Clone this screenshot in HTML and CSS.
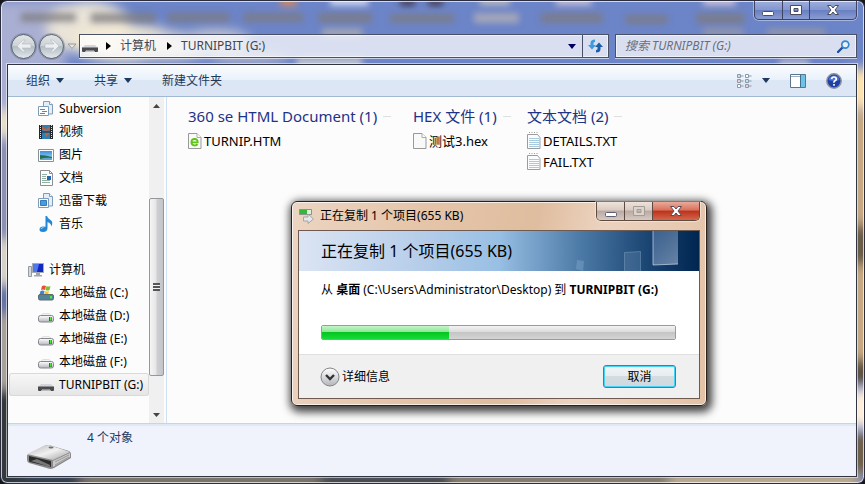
FILE: index.html
```
<!DOCTYPE html>
<html lang="zh-CN">
<head>
    <meta charset="utf-8">
    <meta name="viewport" content="width=device-width, initial-scale=1">
    <title>TURNIPBIT (G:)</title>
    <link rel="stylesheet" href="styles.css">
</head>
<body>
    <!-- shared icons -->
    <svg class="defs" aria-hidden="true">
        <defs>
            <linearGradient id="metal" x1="0" y1="0" x2="0" y2="1">
                <stop offset="0" stop-color="#fff"/>
                <stop offset="1" stop-color="#b4b6bc"/>
            </linearGradient>
            <linearGradient id="sky" x1="0" y1="0" x2="0" y2="1">
                <stop offset="0" stop-color="#3f8fe0"/>
                <stop offset="1" stop-color="#a8e2f6"/>
            </linearGradient>
            <symbol id="i-stack" viewBox="0 0 16 16">
                <path d="M5.500.5h6l3 3v9.500h-9z" fill="#e3eef7" stroke="#7f9db9"/>
                <path d="M11.500.5v3h3" fill="#fff" stroke="#7f9db9"/>
                <path d="M.5 5.500h10v9H.5z" fill="#fff" stroke="#7f9db9"/>
            </symbol>
            <symbol id="i-drive" viewBox="0 0 16 16">
                <path d="M2 8l3-2.500h6L14 8z" fill="#f4f4f4" stroke="#d0d0d0" stroke-width=".6"/>
                <rect x=".5" y="7.500" width="15" height="6.500" rx="2" fill="url(#metal)" stroke="#85878c"/>
                <rect x="11" y="9" width="3" height="4" fill="#3d6b3d"/>
                <rect x="12" y="9" width="1.500" height="3.500" fill="#4dea35"/>
            </symbol>
            <symbol id="i-usb" viewBox="0 0 16 16">
                <path d="M3 7h10l3 3H0z" fill="#d4d5d8"/>
                <path d="M0 9.500h16V13q0 1-1 1h-2l-1.500-2h-7L3 14H1q-1 0-1-1z" fill="#4a4b4f"/>
                <path d="M4.500 12h7l1 1.500h-9z" fill="#8d8e92"/>
            </symbol>
            <symbol id="i-note" viewBox="0 0 14 17">
                <path d="M.5 2.500h10l2.500 3v11H.5z" fill="#fafcfd" stroke="#9a9c9e"/>
                <path d="M2 6.500h10M2 8.500h10M2 10.500h10M2 12.500h10M2 14.500h10" stroke="#a9cbe0"/>
                <path d="M2.500 0v4M5 0v4M7.500 0v4M10 0v4" stroke="#9a9c9e" stroke-dasharray="1 1"/>
            </symbol>
            <symbol id="i-page" viewBox="0 0 14 17">
                <path d="M.5 1.500h8.500l4 4v11H.5z" fill="#f9f9f9" stroke="#999"/>
                <path d="M9 1.500v4h4" fill="#fff" stroke="#aaa"/>
            </symbol>
        </defs>
    </svg>

    <div class="window">
        <!-- blurred desktop behind the glass -->
        <svg class="wallpaper" viewBox="0 0 865 484" preserveAspectRatio="none" aria-hidden="true">
            <defs>
                <filter id="soft" x="-20%" y="-20%" width="140%" height="140%"><feGaussianBlur stdDeviation="6"/></filter>
                <filter id="smear" x="-20%" y="-50%" width="140%" height="200%"><feGaussianBlur stdDeviation="3"/></filter>
            </defs>
            <rect width="865" height="484" fill="#6c84c8"/>
            <g filter="url(#soft)">
                <rect x="-10" y="0" width="75" height="180" fill="#a9afd2"/>
                <rect x="-10" y="110" width="30" height="25" fill="#e8dfc8"/>
                <rect x="-10" y="140" width="30" height="130" fill="#8d91b4"/>
                <rect x="-10" y="240" width="30" height="45" fill="#d8d2c8"/>
                <rect x="-10" y="285" width="30" height="30" fill="#6674a4"/>
                <rect x="-10" y="315" width="30" height="75" fill="#a9a29b"/>
                <rect x="-10" y="390" width="30" height="100" fill="#35393a"/>
                <ellipse cx="88" cy="26" rx="42" ry="26" fill="#e9e3d8"/>
                <ellipse cx="125" cy="42" rx="55" ry="19" fill="#f3ead3"/>
                <ellipse cx="165" cy="45" rx="50" ry="14" fill="#dcd7d0"/>
                <ellipse cx="215" cy="40" rx="35" ry="12" fill="#c2c4d0"/>
                <ellipse cx="250" cy="58" rx="40" ry="6" fill="#aeb3ca"/>
                <rect x="850" y="68" width="30" height="40" fill="#ffe3b0"/>
                <rect x="850" y="110" width="30" height="270" fill="#c7a981"/>
                <rect x="850" y="225" width="30" height="40" fill="#6a5b47"/>
                <rect x="850" y="360" width="30" height="25" fill="#5d5141"/>
                <rect x="850" y="390" width="30" height="38" fill="#fff0dc"/>
                <rect x="850" y="434" width="30" height="40" fill="#6f5f49"/>
                <rect x="-10" y="474" width="90" height="20" fill="#2f3940"/>
                <rect x="80" y="474" width="240" height="20" fill="#7c715f"/>
                <rect x="320" y="474" width="130" height="20" fill="#474642"/>
                <rect x="450" y="474" width="220" height="20" fill="#8a7b64"/>
                <rect x="670" y="474" width="190" height="20" fill="#c2ad8b"/>
            </g>
            <g filter="url(#smear)" fill="#7d7a7e" opacity=".75">
                <rect x="20" y="12" width="55" height="9"/>
                <rect x="90" y="12" width="65" height="10"/>
                <rect x="167" y="12" width="62" height="9"/>
                <rect x="243" y="12" width="60" height="9"/>
                <rect x="318" y="12" width="54" height="10"/>
                <rect x="390" y="13" width="64" height="9"/>
                <rect x="474" y="12" width="45" height="10" fill="#b7b2b4"/>
                <rect x="541" y="12" width="62" height="10"/>
                <rect x="626" y="14" width="42" height="9"/>
                <rect x="697" y="12" width="48" height="11"/>
                <rect x="704" y="28" width="40" height="7" fill="#a09d9e"/>
                <rect x="768" y="28" width="58" height="7" fill="#a09d9e"/>
                <rect x="322" y="28" width="40" height="8" fill="#b9b3a8"/>
                <rect x="400" y="-2" width="15" height="7" fill="#3b2730"/>
                <rect x="428" y="-2" width="15" height="7" fill="#3b2730"/>
                <rect x="330" y="-3" width="38" height="7" fill="#fff"/>
                <rect x="480" y="-3" width="30" height="7" fill="#d8cdbd"/>
                <rect x="556" y="-3" width="36" height="7" fill="#ead8d8"/>
                <rect x="704" y="-3" width="32" height="7" fill="#f5dede"/>
                <rect x="280" y="-3" width="16" height="8" fill="#f08a3c"/>
                <rect x="296" y="58" width="66" height="7" fill="#f5ecd2"/>
                <rect x="780" y="60" width="30" height="5" fill="#f5ecd2"/>
            </g>
        </svg>

        <header class="glass">
            <div class="caption">
                <button class="cap" type="button" aria-label="最小化"><svg width="14" height="14" viewBox="0 0 14 14"><rect x="1.500" y="8.500" width="11" height="4" rx="1" fill="#fff" stroke="#4b4d5e"/></svg></button>
                <button class="cap" type="button" aria-label="最大化"><svg width="14" height="14" viewBox="0 0 14 14"><path fill-rule="evenodd" d="M1.500 2.500h11v9h-11zM5 5.500v3h4v-3z" fill="#fff" stroke="#4b4d5e"/></svg></button>
                <button class="cap cap-close" type="button" aria-label="关闭"><svg width="14" height="14" viewBox="0 0 14 14"><path d="M1.500 2.500h3.500l2 2.500 2-2.500h3.500L9 7l3.500 4.500H9L7 9l-2 2.500H1.500L5 7z" fill="#fff" stroke="#4b4d5e"/></svg></button>
            </div>
            <div class="navbar">
                <div class="travel">
                    <button class="round" type="button" aria-label="后退"><svg width="18" height="18" viewBox="0 0 18 18"><path d="M2 9l6-6h2.500L7 7h9v4H7l3.500 4H8z" fill="#eceeef" stroke="#b5bbc2" stroke-width=".6"/></svg></button>
                    <button class="round" type="button" aria-label="前进"><svg width="18" height="18" viewBox="0 0 18 18"><path d="M16 9l-6-6H7.500L11 7H2v4h9l-3.500 4H10z" fill="#eceeef" stroke="#b5bbc2" stroke-width=".6"/></svg></button>
                    <svg width="10" height="7" viewBox="0 0 10 7"><path d="M1 1h8L5 5.500z" fill="#e6e4e0" stroke="#9b9a9c"/></svg>
                </div>
                <div class="address">
                    <svg width="16" height="16"><use href="#i-usb"/></svg>
                    <svg class="crumb-arrow" width="5" height="8" viewBox="0 0 5 8"><path d="M0 0l5 4-5 4z"/></svg>
                    <a href="#">计算机</a>
                    <svg class="crumb-arrow" width="5" height="8" viewBox="0 0 5 8"><path d="M0 0l5 4-5 4z"/></svg>
                    <a href="#">TURNIPBIT (G:)</a>
                    <button class="drop" type="button" aria-label="历史"><svg width="8" height="5" viewBox="0 0 8 5"><path d="M0 0h8L4 5z" fill="#00005c"/></svg></button>
                    <button class="refresh" type="button" aria-label="刷新"><svg width="15" height="14" viewBox="0 0 15 14"><path d="M7 .5Q2.500.5 2.500 4v2H0l4 4.500L8 6H5.500V4q0-1 1.500-1z" fill="#3c9be0"/><path d="M8 13.500q4.500 0 4.500-3.500V8H15l-4-4.500L7 8h2.500v2q0 1-1.500 1z" fill="#1c5ea8"/></svg></button>
                </div>
                <div class="search">
                    <input type="text" aria-label="搜索" placeholder="搜索 TURNIPBIT (G:)">
                    <svg width="13" height="13" viewBox="0 0 13 13"><path d="M1 12l5-5" stroke="#1d4f9c" stroke-width="2.400" stroke-linecap="round"/><circle cx="8.300" cy="4.600" r="3.500" fill="#e8f2fb" stroke="#3a86c8" stroke-width="1.700"/></svg>
                </div>
            </div>
        </header>

        <div class="client">
            <div class="toolbar">
                <button type="button">组织 <svg width="8" height="5" viewBox="0 0 8 5"><path d="M0 0h8L4 5z"/></svg></button>
                <button type="button">共享 <svg width="8" height="5" viewBox="0 0 8 5"><path d="M0 0h8L4 5z"/></svg></button>
                <button type="button">新建文件夹</button>
                <div class="tools">
                    <button type="button" aria-label="更改视图">
                        <svg width="16" height="14" viewBox="0 0 16 14"><g fill="#fff" stroke="#8b98a8"><path d="M1.500.5h3v3h-3zM1.500 5.500h3v3h-3zM1.500 10.500h3v3h-3zM9.500.5h3v3h-3zM9.500 5.500h3v3h-3zM9.500 10.500h3v3h-3z"/><path d="M5 2h2.500M5 7h2.500M5 12h2.500M13 2h2.500M13 7h2.500M13 12h2.500"/></g><path d="M2.500 6.500h1v1h-1zM10.500 11.500h1v1h-1z" fill="#d33"/><path d="M2.500 1.500h1v1h-1zM10.500 6.500h1v1h-1z" fill="#37a"/></svg>
                        <svg width="8" height="5" viewBox="0 0 8 5"><path d="M0 0h8L4 5z"/></svg>
                    </button>
                    <button type="button" aria-label="预览窗格"><svg width="16" height="14" viewBox="0 0 16 14"><path d="M.5.5h15v13H.5z" fill="#fff" stroke="#5b7490"/><path d="M1 2.500h9" stroke="#9fb0c3"/><path d="M10 1h5v12h-5z" fill="#6cc3e4"/><path d="M10.500 1v12" stroke="#416f93"/></svg></button>
                    <button type="button" aria-label="帮助"><svg width="16" height="16" viewBox="0 0 16 16"><circle cx="8" cy="8" r="7.200" fill="#1f3fa8" stroke="#8d929b" stroke-width="1.500"/><path d="M2.500 7a5.600 5.600 0 0 1 11 0q-5 2-11 0" fill="#4d74d0"/><path d="M5.600 6.200Q5.800 4 8 4t2.300 1.900Q10.300 7 9 7.700T8 9.800M8 11v1.700" fill="none" stroke="#fff" stroke-width="1.700"/></svg></button>
                </div>
            </div>

            <div class="panes">
                <nav class="sidebar">
                    <ul class="tree">
                        <li><a href="#"><svg width="16" height="16"><use href="#i-stack"/><path d="M2 8.500h5M4 10.500h5M2 12.500h5" stroke="#5d86b8"/></svg>Subversion</a></li>
                        <li><a href="#"><svg width="16" height="16" viewBox="0 0 16 16"><path d="M1 1h14v14H1z" fill="#22282b"/><path d="M4 1h8v6.500H4zM4 8.500h8V15H4z" fill="#2e80b4"/><path d="M4 2l4 3 4-3v4L8 7 4 6zM12 9l-4 4-1-4z" fill="#b5654a"/><path d="M2.500 1v14M13.500 1v14" stroke="#dfe6e6" stroke-dasharray="1 1"/></svg>视频</a></li>
                        <li><a href="#"><svg width="16" height="16" viewBox="0 0 16 16"><path d="M.5 2.500h15v12H.5z" fill="#fff" stroke="#8b8f94"/><path d="M2 4h12v9H2z" fill="url(#sky)"/><path d="M2 8q5 0 12 2v3H2z" fill="#2d6b4f"/><path d="M2 12q6-2 12-1v2H2z" fill="#5ba8d0"/></svg>图片</a></li>
                        <li><a href="#"><svg width="16" height="16" viewBox="0 0 16 16"><path d="M2.500.5h9l3 3v12h-12z" fill="#fff" stroke="#8b8f94"/><path d="M11.500.5v3h3" fill="none" stroke="#8b8f94"/><path d="M4 4.500h5M4 6.500h4M4 8.500h4M4 10.500h8M4 12.500h8" stroke="#8fb3a0"/><path d="M9 6h4v4H9z" fill="#2567b5"/></svg>文档</a></li>
                        <li><a href="#"><svg width="16" height="16"><use href="#i-stack"/><path d="M2.500 7.500h6v5h-6z" fill="#469de2" stroke="#347bb8"/></svg>迅雷下载</a></li>
                        <li><a href="#"><svg width="16" height="16" viewBox="0 0 16 16"><path d="M7.500 0H9q.5 2.500 3.500 4t1 6.500Q13 7 9.500 6v6q0 4-4.500 4-3.500 0-3.500-2.500T4.500 10.500l3 .3z" fill="#2587d4"/><path d="M3 13q.5-1.500 2.500-1.500" fill="none" stroke="#9ad6fa"/></svg>音乐</a></li>
                    </ul>
                    <ul class="tree tree-computer">
                        <li class="root"><a href="#"><svg width="16" height="16" viewBox="0 0 16 16"><path d="M.5 4.500h3v10h-3z" fill="#d5d8dc" stroke="#979ba1"/><path d="M4.500 1.500h11v9h-11z" fill="#1229c0" stroke="#a5aab2"/><path d="M6 2h5l-2 8H5V2z" fill="#4f77f0"/><path d="M8 11h4v2h2v1.500H6V13h2z" fill="#a2a6ad"/></svg>计算机</a></li>
                        <li><a href="#"><svg width="16" height="16" viewBox="0 0 16 16"><path d="M4 1q2-1 4 0L7 5Q5 4 3 5z" fill="#e8512b"/><path d="M8.500 1q2 1 4 0l-1 4q-2 1-4 0z" fill="#7cbd32"/><path d="M2.500 6q2-1 4 0l-1 4h-4z" fill="#3a83dc"/><path d="M7 6q2 1 4 0l-1 4H6z" fill="#fcc526"/><rect x=".5" y="9.500" width="15" height="5.500" rx="1.500" fill="#51839a" stroke="#5a6a72"/><path d="M12 11h2v2.500h-2z" fill="#4dea35"/></svg>本地磁盘 (C:)</a></li>
                        <li><a href="#"><svg width="16" height="16"><use href="#i-drive"/></svg>本地磁盘 (D:)</a></li>
                        <li><a href="#"><svg width="16" height="16"><use href="#i-drive"/></svg>本地磁盘 (E:)</a></li>
                        <li><a href="#"><svg width="16" height="16"><use href="#i-drive"/></svg>本地磁盘 (F:)</a></li>
                        <li class="selected"><a href="#"><svg width="16" height="16"><use href="#i-usb"/></svg>TURNIPBIT (G:)</a></li>
                    </ul>
                    <ul class="tree">
                        <li class="root"><a href="#" aria-label="网络"><svg width="16" height="16" viewBox="0 0 16 16"><circle cx="6" cy="5" r="6" fill="#3c86cc"/></svg></a></li>
                    </ul>
                </nav>
                <div class="scrollbar">
                    <button type="button" aria-label="向上"><svg width="7" height="4" viewBox="0 0 7 4"><path d="M3.500 0L7 4H0z" fill="#444"/></svg></button>
                    <div class="track"><div class="thumb"><i></i></div></div>
                    <button type="button" aria-label="向下"><svg width="7" height="4" viewBox="0 0 7 4"><path d="M3.500 4L7 0H0z" fill="#444"/></svg></button>
                </div>
                <main class="files">
                    <section class="group">
                        <h2>360 se HTML Document (1)</h2>
                        <a href="#"><svg width="14" height="17" viewBox="0 0 14 17"><use href="#i-page"/><path d="M3.500 10.300h6.200Q9.700 7 6.600 7t-3.200 3.300q0 3.200 3.300 3.200 2 0 2.800-1.500" fill="none" stroke="#5cc414" stroke-width="1.800"/></svg>TURNIP.HTM</a>
                    </section>
                    <section class="group">
                        <h2>HEX 文件 (1)</h2>
                        <a href="#"><svg width="14" height="17"><use href="#i-page"/></svg>测试3.hex</a>
                    </section>
                    <section class="group">
                        <h2>文本文档 (2)</h2>
                        <a href="#"><svg width="14" height="17"><use href="#i-note"/></svg>DETAILS.TXT</a>
                        <a href="#"><svg width="14" height="17"><use href="#i-note"/></svg>FAIL.TXT</a>
                    </section>
                </main>
            </div>

            <footer class="details">
                <svg width="46" height="26" viewBox="0 0 46 26">
                    <defs><linearGradient id="lid" x1="0" y1="0" x2="1" y2="1"><stop offset="0" stop-color="#b5b5b5"/><stop offset=".5" stop-color="#f1f1f1"/><stop offset="1" stop-color="#9e9e9e"/></linearGradient></defs>
                    <path d="M1 11L18 2q2-1 5-1l20 6q2 1 2 3v4L28 24q-2 1-4 1L3 19q-2-1-2-3z" fill="#8a8a8a"/>
                    <path d="M1 10L18 2q2-1 5-1l21 7-17 8z" fill="url(#lid)"/>
                    <path d="M3 12l22 5v6L4 18q-1 0-1-2z" fill="#2b2b2b"/>
                    <path d="M5 17l6-2 13 6v2z" fill="#777"/>
                    <path d="M27 17l17-8v4l-17 10z" fill="#c9c9c9"/>
                    <path d="M29 18l14-7M29 21l14-8" stroke="#999"/>
                    <ellipse cx="25" cy="3.500" rx="2.500" ry="1" fill="#707070"/>
                </svg>
                <span>4 个对象</span>
            </footer>
        </div>
    </div>

    <div class="dialog" role="dialog" aria-labelledby="copy-title">
        <div class="dialog-title">
            <svg width="16" height="16" viewBox="0 0 16 16"><path d="M.5 1.500h12v5H.5z" fill="#35b63c" stroke="#8b938b"/><path d="M8 2h4v4H8z" fill="#d9f5d9"/><path d="M4.500 9H9V6l5.500 5L9 15.500V13H4.500z" fill="#e6e8ea" stroke="#a2a5a9"/></svg>
            <span id="copy-title">正在复制 1 个项目(655 KB)</span>
            <div class="caption">
                <button class="cap" type="button" aria-label="最小化"><svg width="14" height="14" viewBox="0 0 14 14"><rect x="1.500" y="8.500" width="11" height="4" rx="1" fill="#fff" stroke="#5b5f70"/></svg></button>
                <button class="cap" type="button" aria-label="最大化" disabled><svg width="14" height="14" viewBox="0 0 14 14"><path fill-rule="evenodd" d="M1.500 2.500h11v9h-11zM5 5.500v3h4v-3z" fill="#ddd3cd" stroke="#a59c98"/></svg></button>
                <button class="cap cap-close" type="button" aria-label="关闭"><svg width="14" height="14" viewBox="0 0 14 14"><path d="M1.500 2.500h3.500l2 2.500 2-2.500h3.500L9 7l3.500 4.500H9L7 9l-2 2.500H1.500L5 7z" fill="#fff" stroke="#5b4a5a"/></svg></button>
            </div>
        </div>
        <div class="dialog-client">
            <div class="banner">
                <h1>正在复制 1 个项目(655 KB)</h1>
                <svg width="130" height="41" viewBox="0 0 130 41" aria-hidden="true">
                    <defs><linearGradient id="pane" x1="0" y1="0" x2="1" y2="1"><stop offset="0" stop-color="#7fa0cc" stop-opacity=".35"/><stop offset="1" stop-color="#a9bcd6" stop-opacity=".6"/></linearGradient></defs>
                    <path d="M8 29l7 1-1 10-7-2z" fill="#8fb4d6" opacity=".35"/>
                    <path d="M55.500 41V21.500l16-1V41" fill="#7fa0c4" fill-opacity=".25" stroke="#9fbdd8" stroke-opacity=".35"/>
                    <path d="M84 0h25v33l-25 1z" fill="url(#pane)"/>
                    <path d="M84 0v34l25-1" fill="none" stroke="#c9d9ea" stroke-opacity=".7"/>
                </svg>
            </div>
            <div class="dialog-body">
                <p>从 <b>桌面</b> (C:\Users\Administrator\Desktop) 到 <b>TURNIPBIT (G:)</b></p>
                <progress max="100" value="36" aria-label="复制进度"></progress>
            </div>
            <div class="dialog-foot">
                <button class="more" type="button"><svg width="20" height="20" viewBox="0 0 20 20"><circle cx="10" cy="10" r="9" fill="url(#metal)" stroke="#858585"/><path d="M6 8l4 4 4-4" fill="none" stroke="#333" stroke-width="2.400"/></svg><span>详细信息</span></button>
                <button class="cancel" type="button">取消</button>
            </div>
        </div>
    </div>
</body>
</html>
```
FILE: styles.css
```
* {
  box-sizing: border-box;
}
body {
  margin: 0;
  height: 100vh;
  overflow: hidden;
  position: relative;
  background: #15171c;
  color: #000;
  font: 12px/16px "Noto Sans", "Noto Sans CJK SC", sans-serif;
}
button, input {
  font: inherit;
  color: inherit;
  margin: 0;
  padding: 0;
  border: 0;
  background: none;
}
a {
  color: inherit;
  text-decoration: none;
}
svg {
  flex: none;
  display: block;
}
ul, h1, h2, p {
  margin: 0;
  padding: 0;
  list-style: none;
  font-weight: normal;
}
.defs {
  position: absolute;
  width: 0;
  height: 0;
}

/* explorer window */
.window {
  position: relative;
  height: 100%;
  display: flex;
  flex-direction: column;
  padding: 0 7px 6px 6px;
  border: 1px solid #2b2c3c;
  border-radius: 7px;
  overflow: hidden;
  box-shadow: inset 0 0 0 1px rgba(255, 255, 255, 0.7);
}
.wallpaper {
  position: absolute;
  inset: 0;
  width: 100%;
  height: 100%;
  z-index: -1;
}
.glass {
  height: 63px;
  flex: none;
}
.caption {
  display: flex;
  margin-left: auto;
  border: 1px solid #3e4460;
  border-top: 0;
  border-radius: 0 0 5px 5px;
  overflow: hidden;
  box-shadow: 0 0 0 1px rgba(255, 255, 255, 0.4);
}
.cap {
  width: 28px;
  height: 18px;
  display: flex;
  align-items: center;
  justify-content: center;
  background: linear-gradient(rgba(255, 255, 255, 0.35), rgba(255, 255, 255, 0.15) 50%, rgba(60, 70, 120, 0.1) 50%, rgba(255, 255, 255, 0.2));
  border-right: 1px solid #3e4460;
}
.cap-close {
  width: 46px;
  border-right: 0;
}
.glass .caption {
  width: 103px;
}
.navbar {
  display: flex;
  align-items: center;
  margin-top: 14px;
  height: 24px;
}
.travel {
  display: flex;
  align-items: center;
  gap: 3px;
  width: 72px;
  padding-left: 4px;
}
.round {
  width: 25px;
  height: 25px;
  display: flex;
  flex: none;
  align-items: center;
  justify-content: center;
  border: 1px solid #54606f;
  border-radius: 50%;
  background: linear-gradient(#e3e5e6, #cbd1d6 50%, #b3bdc5 50%, #e3e8ea);
  box-shadow: 0 0 0 1px rgba(90, 95, 105, 0.35);
}
.address, .search {
  display: flex;
  align-items: center;
  height: 24px;
  border: 1px solid #4b5069;
  background: rgba(255, 255, 255, 0.74);
  color: #3f4650;
  box-shadow: inset 0 0 0 1px rgba(255, 255, 255, 0.6), 0 1px 0 rgba(255, 255, 255, 0.6);
}
.address {
  flex: 1;
  padding-left: 2px;
}
.address a {
  margin: 0 11px 0 9px;
}
.crumb-arrow {
  margin-left: 8px;
}
a + .crumb-arrow {
  margin-left: 0;
}
.drop {
  margin-left: auto;
  width: 20px;
  height: 22px;
  display: grid;
  place-items: center;
}
.refresh {
  width: 26px;
  height: 22px;
  display: grid;
  place-items: center;
  border-left: 1px solid #4b5069;
}
.search {
  flex: 0 0 242px;
  margin-left: 6px;
  padding: 0 6px 0 9px;
}
.search input {
  flex: 1;
  min-width: 0;
  outline: 0;
  font-style: italic;
}
.search input::placeholder {
  color: #6b6e78;
}

.client {
  flex: 1;
  min-height: 0;
  display: flex;
  flex-direction: column;
  border: 1px solid #2f3440;
  background: #fcfcfc;
  box-shadow: 0 0 0 1px rgba(255, 255, 255, 0.55);
}
.toolbar {
  display: flex;
  align-items: center;
  height: 32px;
  flex: none;
  gap: 30px;
  padding: 0 14px 0 18px;
  color: #1e395b;
  background: linear-gradient(#fbfdff, #e8f1fa 48%, #dce7f5 50%, #dce6f4);
  border-bottom: 1px solid #a3b8d1;
}
.toolbar button {
  display: flex;
  align-items: center;
  gap: 6px;
}
.toolbar path:only-child {
  fill: #1e395b;
}
.tools {
  display: flex;
  align-items: center;
  gap: 20px;
  margin-left: auto;
}
.tools button:first-child {
  gap: 10px;
}
.panes {
  flex: 1;
  min-height: 0;
  display: flex;
}
.sidebar {
  width: 141px;
  flex: none;
  overflow: hidden;
}
.tree-computer {
  margin: 23px 0;
}
.tree a {
  display: flex;
  align-items: center;
  gap: 5px;
  height: 23px;
  padding-left: 30px;
  white-space: nowrap;
}
.tree .root a {
  padding-left: 20px;
}
.selected {
  margin-left: 1px;
  border-radius: 3px;
  background: linear-gradient(#f8f8f8, #e5e5e5);
  box-shadow: inset 0 0 0 1px #d9d9d9;
}
.tree .selected a {
  padding-left: 29px;
}
.scrollbar {
  width: 17px;
  flex: none;
  display: flex;
  flex-direction: column;
  background: #f0f0f0;
  border-right: 2px solid #fcfcfc;
}
.scrollbar button {
  height: 17px;
  display: grid;
  place-items: center;
}
.track {
  flex: 1;
  display: flex;
  flex-direction: column;
  justify-content: flex-end;
  padding-bottom: 30px;
}
.thumb {
  height: 68%;
  min-height: 20px;
  flex: none;
  display: grid;
  place-items: center;
  border: 1px solid #979797;
  border-radius: 2px;
  background: linear-gradient(90deg, #f5f5f5, #e6e6e8 45%, #cfcfd3 55%, #c3c4c9);
}
.thumb i {
  width: 7px;
  height: 8px;
  background: repeating-linear-gradient(#555 0 2px, #f2f2f2 2px 3px);
}
.files {
  flex: 1;
  min-width: 0;
  display: grid;
  grid-template-columns: 225px 114px auto;
  align-items: start;
  padding: 8px 21px;
  border-left: 1px solid #cfe0f2;
}
.group h2 {
  display: flex;
  align-items: center;
  gap: 6px;
  margin-bottom: 3px;
  font-size: 15px;
  line-height: 22px;
  color: #1e3287;
  white-space: nowrap;
}
.group h2::after {
  content: "";
  width: 8px;
  height: 1px;
  background: #dfdfdf;
}
.group a {
  display: flex;
  align-items: center;
  gap: 2px;
  height: 21px;
  font-size: 13px;
}
.details {
  display: flex;
  align-items: flex-start;
  gap: 15px;
  height: 53px;
  flex: none;
  padding: 6px 18px;
  color: #1e395b;
  background: #f0f3fc;
  border-top: 1px solid #c3d5e8;
  box-shadow: inset 0 2px 1px #dfe9f4;
}
.details svg {
  align-self: flex-end;
}

/* copy dialog */
.dialog {
  position: absolute;
  left: 291px;
  top: 201px;
  width: 416px;
  padding: 0 6px 6px;
  border: 1px solid #2a211c;
  border-radius: 6px;
  background: linear-gradient(100deg, #ecd5c2, #e5c5a9 30%, #dfbd9f 55%, #ecd3bf 70%, #e3c2a6);
  box-shadow: inset 0 0 0 1px rgba(255, 255, 255, 0.7), 2px 3px 9px 3px rgba(0, 0, 0, 0.75);
}
.dialog-title {
  display: flex;
  align-items: center;
  gap: 5px;
  height: 28px;
  padding-left: 1px;
}
.dialog .caption {
  align-self: flex-start;
  border-color: #5d4a42;
}
.dialog .cap {
  border-color: #5d4a42;
  background: linear-gradient(#efe2d9, #d9cbc2 45%, #b8aaa3 50%, #d8cac0);
}
.dialog .cap-close {
  background: linear-gradient(#eaa999, #d9725c 45%, #bb3219 50%, #d4664c);
}
.dialog-client {
  border: 1px solid #6e5a50;
  background: #fff;
}
.banner {
  display: flex;
  align-items: center;
  justify-content: space-between;
  height: 40px;
  padding-left: 22px;
  overflow: hidden;
  background: linear-gradient(90deg, #dbe4f3, #b9cfea 28%, #98bfe4 50%, #4d7ba7 70%, #1b4573 87%, #002650);
}
.banner h1 {
  font-size: 16px;
  line-height: 24px;
}
.dialog-body {
  padding: 11px 23px 14px 22px;
}
.dialog-body p {
  white-space: nowrap;
}
progress {
  display: block;
  width: 100%;
  height: 15px;
  margin-top: 27px;
  appearance: none;
  -webkit-appearance: none;
  border: 1px solid #9a9a9a;
  border-radius: 2px;
  overflow: hidden;
}
progress::-webkit-progress-bar {
  background: linear-gradient(#f3f3f3, #dcdcdc 45%, #c5c5c5 50%, #d5d5d5);
}
progress::-webkit-progress-value {
  background: linear-gradient(#c4f5c9, #8ce796 45%, #05c522 50%, #14dc38);
}
.dialog-foot {
  display: flex;
  align-items: center;
  justify-content: space-between;
  height: 44px;
  padding: 0 23px 0 21px;
  background: #f0f0f0;
  border-top: 1px solid #dfdfdf;
}
.more {
  display: flex;
  align-items: center;
  gap: 2px;
}
.cancel {
  width: 73px;
  height: 23px;
  border: 1px solid #3c7fb1;
  border-radius: 3px;
  background: linear-gradient(#f2f5f7, #e6ecef 48%, #d3dce1 50%, #cfd9de);
  box-shadow: inset 0 0 0 1px #46d2f7;
}
```
